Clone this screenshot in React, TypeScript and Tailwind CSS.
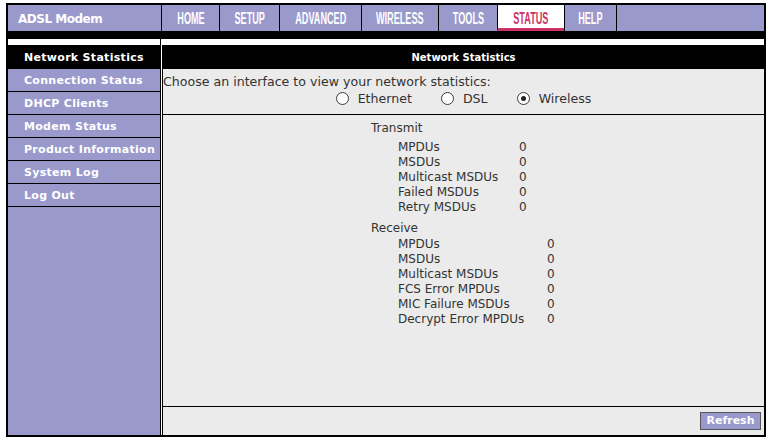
import React from "react";

const PURPLE = "bg-[#9999cc]";

const navItems = [
  { label: "HOME", width: "w-[58px]" },
  { label: "SETUP", width: "w-[60px]" },
  { label: "ADVANCED", width: "w-[82px]" },
  { label: "WIRELESS", width: "w-[77px]" },
  { label: "TOOLS", width: "w-[59px]" },
  { label: "STATUS", width: "w-[67px]", active: true },
  { label: "HELP", width: "w-[52px]" },
];

const sideItems = [
  "Network Statistics",
  "Connection Status",
  "DHCP Clients",
  "Modem Status",
  "Product Information",
  "System Log",
  "Log Out",
];

const transmit = [
  ["MPDUs", "0"],
  ["MSDUs", "0"],
  ["Multicast MSDUs", "0"],
  ["Failed MSDUs", "0"],
  ["Retry MSDUs", "0"],
];

const receive = [
  ["MPDUs", "0"],
  ["MSDUs", "0"],
  ["Multicast MSDUs", "0"],
  ["FCS Error MPDUs", "0"],
  ["MIC Failure MSDUs", "0"],
  ["Decrypt Error MPDUs", "0"],
];

function Radio({ label, checked = false }: { label: string; checked?: boolean }) {
  return (
    <div className="flex items-center gap-[9px]">
      <span className="flex h-[13px] w-[13px] items-center justify-center rounded-full border border-[#3a3a3a] bg-white">
        {checked && <span className="h-[5px] w-[5px] rounded-full bg-[#222]" />}
      </span>
      <span>{label}</span>
    </div>
  );
}

function StatTable({ rows, labelWidth }: { rows: string[][]; labelWidth: string }) {
  return (
    <div className="pl-[27px]">
      {rows.map(([label, value], i) => (
        <div key={i} className="flex h-[15px] items-center">
          <span className={`${labelWidth} shrink-0`}>{label}</span>
          <span>{value}</span>
        </div>
      ))}
    </div>
  );
}

export default function App() {
  return (
    <div
      className="ml-[6px] mt-[3px] flex h-[434px] w-[760px] flex-col border-2 border-black bg-white"
      style={{ fontFamily: '"DejaVu Sans", Verdana, sans-serif' }}
    >
      {/* Kopfzeile mit Navigation */}
      <div className="flex h-[26px] shrink-0">
        <div
          className={`${PURPLE} flex w-[153px] shrink-0 items-center pl-[10px] pt-px text-[12px] font-bold tracking-[-0.5px] text-white`}
        >
          ADSL Modem
        </div>
        {navItems.map((item) => (
          <div
            key={item.label}
            className={`${item.width} flex shrink-0 items-center justify-center border-l border-black ${
              item.active
                ? "border-b-[3px] border-b-[#cc3366] bg-white pt-[4px] text-[#cc3366]"
                : `${PURPLE} pt-[2px] text-white`
            }`}
          >
            <span
              className="inline-block shrink-0 scale-x-[0.57] whitespace-nowrap text-[16px] font-bold"
              style={{ fontFamily: '"Liberation Sans", Arial, sans-serif' }}
            >
              {item.label}
            </span>
          </div>
        ))}
        <div className={`${PURPLE} flex-1 border-l border-black`} />
      </div>

      <div className="h-[8px] shrink-0 bg-black" />

      <div className="flex flex-1">
        {/* Seitenmenü */}
        <div className={`${PURPLE} flex w-[153px] shrink-0 flex-col border-r border-black`}>
          <div className="h-[6px] shrink-0 bg-white" />
          {sideItems.map((label, i) => (
            <div
              key={label}
              className={`flex shrink-0 items-center border-b border-black pl-[16px] pt-[3px] text-[11px] font-bold tracking-[0.3px] text-white ${
                i === 0 ? "h-[24px] bg-black" : "h-[23px]"
              }`}
            >
              {label}
            </div>
          ))}
        </div>

        <div className="w-px shrink-0 bg-white" />

        {/* Inhalt */}
        <div className="flex flex-1 flex-col">
          <div className="h-[6px] shrink-0 bg-white" />
          <div className="flex flex-1 flex-col border-l border-black bg-[#ebebeb] text-[12.6px] text-[#333]">
            <div className="flex h-[24px] shrink-0 items-center justify-center bg-black text-[10px] font-bold text-white">
              Network Statistics
            </div>

            <div className="h-[46px] shrink-0 border-b border-black pt-[5px]">
              <div className="leading-[15px]">Choose an interface to view your network statistics:</div>
              <div className="mt-[2px] flex justify-center gap-[29px] leading-[15px]">
                <Radio label="Ethernet" />
                <Radio label="DSL" />
                <Radio label="Wireless" checked />
              </div>
            </div>

            <div className="flex h-[292px] shrink-0 justify-center border-b border-black pt-[6px] text-[12px] leading-[15px]">
              <div className="w-[185px]">
                <div className="h-[15px]">Transmit</div>
                <div className="mt-[4px]">
                  <StatTable rows={transmit} labelWidth="w-[121px]" />
                </div>
                <div className="mt-[6px] h-[15px]">Receive</div>
                <div className="mt-px">
                  <StatTable rows={receive} labelWidth="w-[149px]" />
                </div>
              </div>
            </div>

            <div className="flex flex-1 items-center justify-end pr-[3px]">
              <button className={`${PURPLE} h-[18px] w-[61px] border border-[#555] text-[11px] font-bold text-white`}>
                Refresh
              </button>
            </div>
          </div>
        </div>
      </div>
    </div>
  );
}
